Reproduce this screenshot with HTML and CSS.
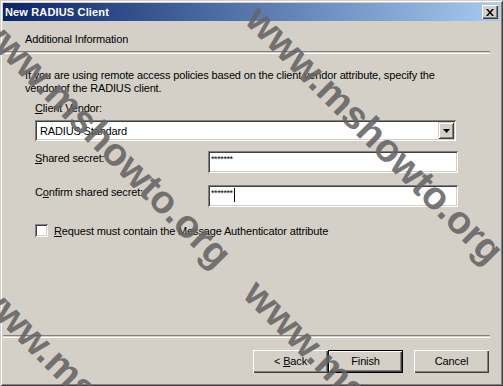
FILE: index.html
```html
<!DOCTYPE html>
<html>
<head>
<meta charset="utf-8">
<link rel="stylesheet" href="styles.css">
</head>
<body>
<div class="window">
  <div class="titlebar">
    <span class="title">New RADIUS Client</span>
    <span class="close"><svg width="8" height="7" viewBox="0 0 8 7"><path d="M0 0h2l2 2.5 2-2.5h2L5 3.5 8 7H6L4 4.5 2 7H0l3-3.5z" fill="#000"/></svg></span>
  </div>
  <div class="header"><div class="header-title">Additional Information</div></div>
  <div class="sep"></div>
  <div class="body">
    <p class="intro">If you are using remote access policies based on the client vendor attribute, specify the vendor of the RADIUS client.</p>
    <div class="fields">
      <div class="lbl"><u>C</u>lient Vendor:</div>
      <div class="combo">
        <span class="combo-text">RADIUS Standard</span>
        <span class="drop"><svg width="7" height="4" viewBox="0 0 7 4"><path d="M0 0h7L3.5 4z" fill="#000"/></svg></span>
      </div>
      <div class="row">
        <div class="row-lbl"><u>S</u>hared secret:</div>
        <div class="input"><span class="pw">*******</span></div>
      </div>
      <div class="row row2">
        <div class="row-lbl">C<u>o</u>nfirm shared secret:</div>
        <div class="input"><span class="pw">*******</span><span class="caret"></span></div>
      </div>
      <div class="check">
        <span class="box"></span>
        <span class="check-lbl"><u>R</u>equest must contain the Message Authenticator attribute</span>
      </div>
    </div>
  </div>
  <div class="sep"></div>
  <div class="buttons">
    <div class="btn">&lt;&nbsp;<u>B</u>ack</div>
    <div class="btn default"><div class="btn-in">Finish</div></div>
    <div class="btn cancel">Cancel</div>
  </div>
  <div class="wm wm-a">www.mshowto.org</div>
  <div class="wm wm-b">www.mshowto.org</div>
  <div class="wm wm-c">www.mshowto.org</div>
  <div class="wm wm-d">www.mshowto.org</div>
</div>
</body>
</html>
```

FILE: styles.css
```css
html, body {
  margin: 0;
  padding: 0;
  background: #d4d0c8;
}
body {
  font-family: "Liberation Sans", Arial, sans-serif;
  font-size: 11px;
  letter-spacing: -0.15px;
  color: #000;
}
.window {
  position: relative;
  width: 503px;
  height: 386px;
  box-sizing: border-box;
  padding: 3px;
  background: #d4d0c8;
  box-shadow: inset 1px 1px 0 #d4d0c8, inset -1px -1px 0 #404040, inset 2px 2px 0 #ffffff, inset -2px -2px 0 #808080;
  display: flex;
  flex-direction: column;
  overflow: hidden;
}
.titlebar {
  height: 18px;
  flex: none;
  display: flex;
  align-items: center;
  justify-content: space-between;
  background: linear-gradient(to right, #0a246a, #a6caf0);
}
.title {
  color: #fff;
  font-weight: bold;
  padding-left: 2px;
  letter-spacing: 0.15px;
}
.close {
  width: 16px;
  height: 14px;
  margin-right: 2px;
  box-sizing: border-box;
  background: #d4d0c8;
  box-shadow: inset 1px 1px 0 #fff, inset -1px -1px 0 #404040, inset -2px -2px 0 #808080;
  display: flex;
  align-items: center;
  justify-content: center;
}
.header {
  height: 30px;
  flex: none;
  box-sizing: border-box;
  padding: 12px 0 0 22px;
  line-height: 13px;
}
.sep {
  height: 1px;
  flex: none;
  margin-right: 10px;
  border-top: 1px solid #808080;
  border-bottom: 1px solid #ffffff;
}
.body {
  flex: 1;
  padding: 15px 0 0 22px;
}
.intro {
  margin: 0;
  line-height: 13px;
  width: 440px;
}
.fields {
  margin-left: 10px;
  padding-top: 7px;
}
.lbl {
  line-height: 13px;
}
.combo {
  margin-top: 5px;
  width: 421px;
  height: 21px;
  box-sizing: border-box;
  background: #fff;
  box-shadow: inset 1px 1px 0 #808080, inset -1px -1px 0 #fff, inset 2px 2px 0 #404040, inset -2px -2px 0 #d4d0c8;
  display: flex;
  align-items: center;
  justify-content: space-between;
  padding: 2px 2px 2px 5px;
}
.drop {
  width: 16px;
  height: 17px;
  box-sizing: border-box;
  background: #d4d0c8;
  box-shadow: inset 1px 1px 0 #d4d0c8, inset -1px -1px 0 #404040, inset 2px 2px 0 #fff, inset -2px -2px 0 #808080;
  display: flex;
  align-items: center;
  justify-content: center;
}
.row {
  display: flex;
  align-items: flex-start;
  margin-top: 10px;
}
.row2 {
  margin-top: 12px;
}
.row-lbl {
  width: 173px;
  line-height: 13px;
  padding-top: 1px;
}
.input {
  width: 250px;
  height: 22px;
  box-sizing: border-box;
  background: #fff;
  box-shadow: inset 1px 1px 0 #808080, inset -1px -1px 0 #fff, inset 2px 2px 0 #404040, inset -2px -2px 0 #d4d0c8;
  padding: 4px 0 0 3px;
  display: flex;
  align-items: flex-start;
}
.pw {
  font-size: 9px;
  line-height: 9px;
  letter-spacing: -0.4px;
}
.caret {
  width: 1px;
  height: 14px;
  background: #000;
  margin-left: 1px;
  margin-top: -1px;
}
.check {
  display: flex;
  align-items: center;
  margin-top: 17px;
}
.box {
  width: 13px;
  height: 13px;
  box-sizing: border-box;
  background: #fff;
  box-shadow: inset 1px 1px 0 #808080, inset -1px -1px 0 #fff, inset 2px 2px 0 #404040, inset -2px -2px 0 #d4d0c8;
  margin-right: 6px;
}
.buttons {
  flex: none;
  display: flex;
  justify-content: flex-end;
  padding: 12px 11px 10px 0;
}
.btn {
  width: 75px;
  height: 23px;
  box-sizing: border-box;
  background: #d4d0c8;
  box-shadow: inset 1px 1px 0 #fff, inset -1px -1px 0 #404040, inset -2px -2px 0 #808080;
  display: flex;
  align-items: center;
  justify-content: center;
  line-height: 13px;
}
.btn.default {
  box-shadow: none;
  border: 1px solid #000;
  padding: 0;
}
.btn-in {
  width: 100%;
  height: 100%;
  box-sizing: border-box;
  display: flex;
  align-items: center;
  justify-content: center;
  box-shadow: inset 1px 1px 0 #fff, inset -1px -1px 0 #404040, inset -2px -2px 0 #808080;
}
.btn.cancel {
  margin-left: 11px;
}
u {
  text-decoration: underline;
  text-underline-offset: 1px;
}
.wm {
  position: absolute;
  font-family: "Liberation Sans", Arial, sans-serif;
  font-weight: bold;
  font-size: 39px;
  line-height: 39px;
  letter-spacing: 0;
  white-space: nowrap;
  color: rgba(100, 100, 100, 0.9);
  transform-origin: 0 50%;
  transform: rotate(45deg);
  pointer-events: none;
}
.wm-a { left: 253px; top: -7px; }
.wm-b { left: -19px; top: -3px; }
.wm-c { left: -19px; top: 265px; }
.wm-d { left: 251px; top: 267px; }
```
